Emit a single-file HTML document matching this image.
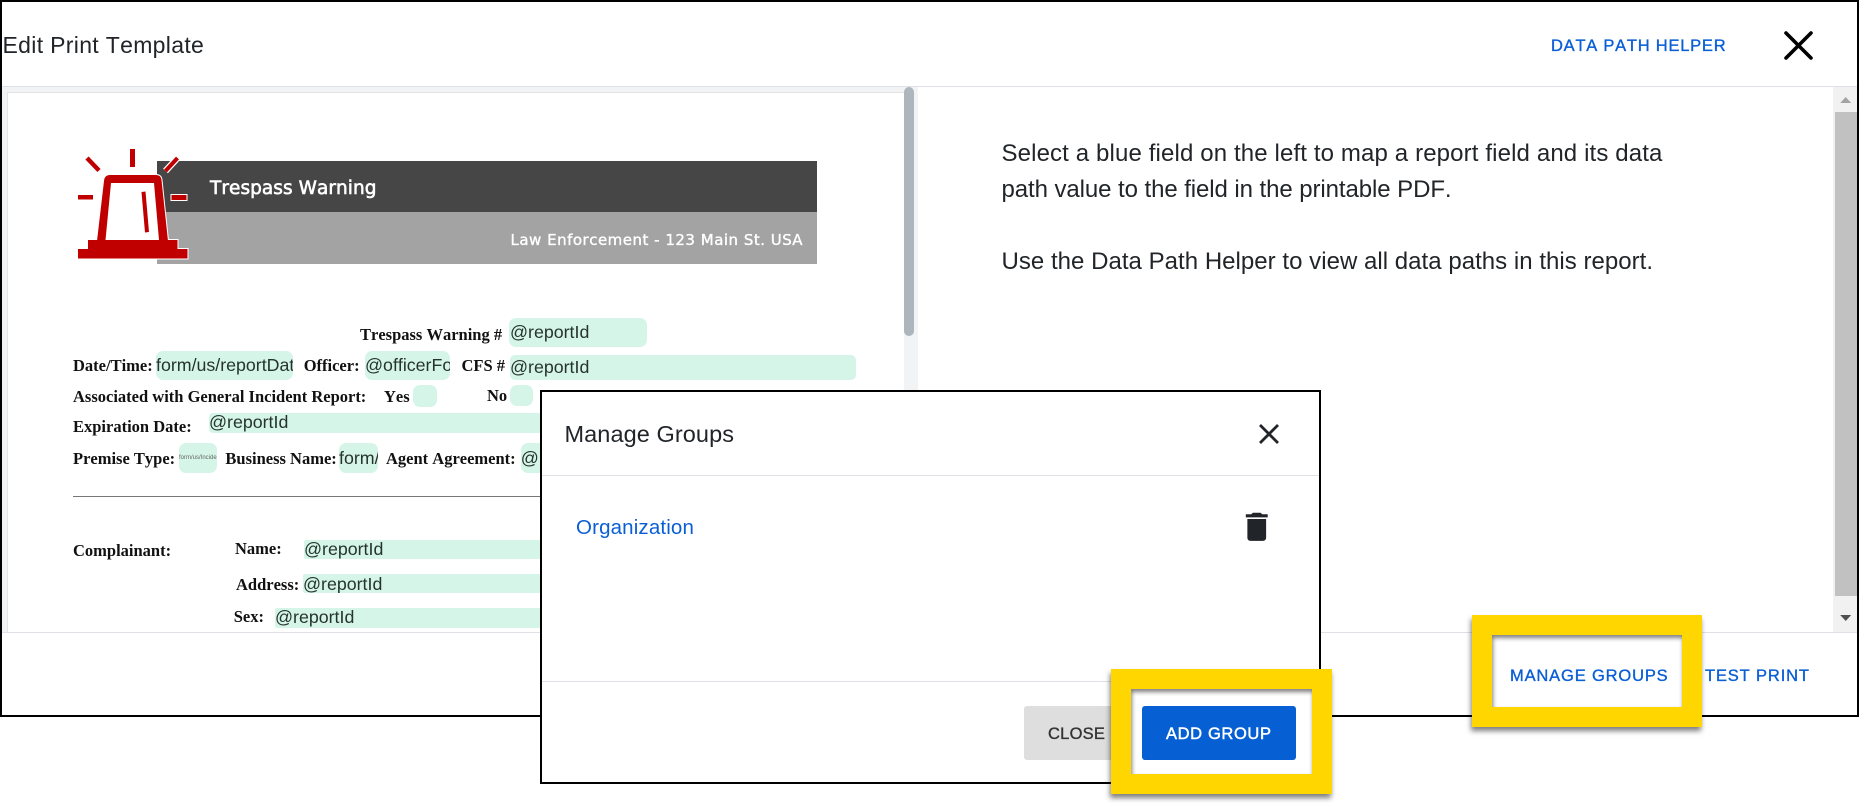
<!DOCTYPE html>
<html lang="en">
<head>
<meta charset="utf-8">
<title>Edit Print Template</title>
<style>
html,body{margin:0;padding:0;background:#fff;width:1862px;height:812px;overflow:hidden}
body{position:relative;font-family:"Liberation Sans",sans-serif;color:#212529;font-kerning:none}
.a{position:absolute}
.t{position:absolute;white-space:nowrap}
.b{color:#0a5fd5;font-size:16.500px;line-height:20px;-webkit-text-stroke:.35px currentColor}
.s{font-family:"Liberation Serif",serif;font-weight:700;font-size:16.500px;line-height:20px;color:#111}
.f{position:absolute;background:#d5f5e8;border-radius:7px;overflow:hidden;color:#26332e;font-size:17.800px;line-height:20px;white-space:nowrap}
.f span{position:absolute;left:1px}
.y{position:absolute;box-sizing:border-box;border:20px solid #ffd600;box-shadow:-1px 4px 5px rgba(0,0,0,.5),inset 1px 3px 4px rgba(0,0,0,.5)}
</style>
</head>
<body>
<!-- main dialog -->
<div class="a" style="left:0;top:0;width:1859px;height:717px;box-sizing:border-box;border:2px solid #000;background:#fff"></div>
<div class="a" style="left:2px;top:86px;width:1855px;height:1px;background:#dee2e6"></div>
<div class="a" style="left:2px;top:632px;width:1855px;height:1px;background:#dee2e6"></div>
<div class="t" style="left:2.500px;top:32px;font-size:23px;line-height:26px;letter-spacing:.32px">Edit Print Template</div>
<div class="t b" style="left:1551px;top:36px;letter-spacing:.76px">DATA PATH HELPER</div>
<svg class="a" style="left:1780px;top:26px" width="40" height="38" viewBox="0 0 40 38"><path d="M6 7 L31 32 M31 7 L6 32" stroke="#000" stroke-width="3.600" fill="none" stroke-linecap="round"/></svg>

<!-- left pane -->
<div class="a" style="left:2px;top:87px;width:916px;height:545px;background:#f1f3f5"></div>
<div class="a" style="left:7px;top:92px;width:897px;height:540px;background:#fff;box-sizing:border-box;border-left:1px solid #e2e4e6;border-top:1px solid #e2e4e6"></div>
<div class="a" style="left:904px;top:87px;width:10px;height:249px;background:#adb5bd;border-radius:5px"></div>

<!-- pdf banner -->
<div class="a" style="left:157px;top:161px;width:660px;height:51px;background:#464646"></div>
<div class="a" style="left:157px;top:212px;width:660px;height:52px;background:#a3a3a3"></div>
<div class="t" style="left:210px;top:176.500px;font-family:'DejaVu Sans',sans-serif;font-size:18.500px;line-height:24px;color:#fff;-webkit-text-stroke:.6px #fff;letter-spacing:.05px">Trespass Warning</div>
<div class="t" style="left:510.500px;top:229.500px;font-family:'DejaVu Sans',sans-serif;font-size:15px;line-height:20px;color:#fff;-webkit-text-stroke:.35px #fff;letter-spacing:.5px">Law Enforcement - 123 Main St. USA</div>
<svg class="a" style="left:70px;top:140px" width="125" height="125" viewBox="70 140 125 125">
  <g fill="#fff" stroke="#fff" stroke-width="2">
    <path d="M161.500 180 L168 241 L97 241 L104 181 Q104.500 175 110 175 L156 175 Q161 175 161.500 180 Z"/>
    <rect x="88" y="240" width="89.500" height="10"/>
    <rect x="78" y="249" width="109.500" height="9.500"/>
  </g>
  <g fill="#c00000">
    <path d="M104 181 Q104.500 175 110 175 L156 175 Q161 175 161.500 180 L168 241 L97 241 Z"/>
    <path d="M111 183 L154 183 L159 240 L105.500 240 Z" fill="#fff"/>
    <path d="M141.500 192 L145.500 191.500 L149 232 L145 232.500 Z"/>
    <rect x="88" y="240" width="89.500" height="10"/>
    <rect x="78" y="249" width="109.500" height="9.500"/>
    <rect x="130" y="149" width="5" height="18"/>
    <rect x="78" y="195" width="15" height="4.500"/>
    <rect x="170.500" y="194" width="17" height="7" fill="#fff"/>
    <rect x="171.500" y="195" width="15" height="5"/>
  </g>
  <path d="M87 158 L99 170.500" stroke="#c00000" stroke-width="4.500"/>
  <path d="M177.500 158 L165.500 171" stroke="#fff" stroke-width="6.500"/>
  <path d="M177.500 158 L165.500 171" stroke="#c00000" stroke-width="4"/>
</svg>

<!-- pdf form -->
<div class="t s" style="left:360px;top:325px">Trespass Warning #</div>
<div class="f" style="left:509px;top:318px;width:137.500px;height:29px"><span style="top:4px">@reportId</span></div>

<div class="t s" style="left:73px;top:355.500px">Date/Time:</div>
<div class="f" style="left:156px;top:351px;width:136.500px;height:29px"><span style="top:4px;left:0">form/us/reportDate</span></div>
<div class="t s" style="left:303.700px;top:355.500px">Officer:</div>
<div class="f" style="left:365px;top:351px;width:85px;height:29px"><span style="top:4px;left:0">@officerFoo</span></div>
<div class="t s" style="left:461.500px;top:355.500px">CFS #</div>
<div class="f" style="left:510px;top:355px;width:346px;height:25px;border-radius:5px"><span style="top:2px;left:0">@reportId</span></div>

<div class="t s" style="left:73px;top:386.500px">Associated with General Incident Report:</div>
<div class="t s" style="left:384px;top:386.500px">Yes</div>
<div class="f" style="left:413px;top:385px;width:24px;height:22px"></div>
<div class="t s" style="left:487px;top:386px">No</div>
<div class="f" style="left:510px;top:385px;width:22.600px;height:21px"></div>

<div class="t s" style="left:73px;top:417px">Expiration Date:</div>
<div class="f" style="left:209px;top:413px;width:400px;height:20px;border-radius:4px"><span style="top:-1px;left:0">@reportId</span></div>

<div class="t s" style="left:73px;top:448.500px">Premise Type:</div>
<div class="f" style="left:179px;top:443px;width:38px;height:30px"><span style="top:5px;left:0;font-size:6px;color:#666">form/us/Incident</span></div>
<div class="t s" style="left:225.400px;top:448.500px">Business Name:</div>
<div class="f" style="left:339px;top:443px;width:39px;height:30px"><span style="top:5px;left:0">form/us</span></div>
<div class="t s" style="left:386px;top:448.500px">Agent Agreement:</div>
<div class="f" style="left:520.800px;top:443px;width:100px;height:30px"><span style="top:5px;left:0">@reportId</span></div>

<div class="a" style="left:73px;top:495.500px;width:500px;height:1.500px;background:#777"></div>

<div class="t s" style="left:73px;top:541px">Complainant:</div>
<div class="t s" style="left:235px;top:539px">Name:</div>
<div class="f" style="left:304px;top:540px;width:400px;height:19px;border-radius:2px"><span style="top:-1px;left:0">@reportId</span></div>
<div class="t s" style="left:236px;top:575px">Address:</div>
<div class="f" style="left:303px;top:574px;width:400px;height:19px;border-radius:2px"><span style="top:0;left:0">@reportId</span></div>
<div class="t s" style="left:233.700px;top:607px">Sex:</div>
<div class="f" style="left:275px;top:608px;width:400px;height:20px;border-radius:2px"><span style="top:-1px;left:0">@reportId</span></div>

<!-- right pane -->
<div class="t" style="left:1001.500px;top:136px;font-size:24px;line-height:36px;letter-spacing:.13px;color:#212529">Select a blue field on the left to map a report field and its data</div>
<div class="t" style="left:1001.500px;top:172px;font-size:24px;line-height:36px;letter-spacing:-.08px;color:#212529">path value to the field in the printable PDF.</div>
<div class="t" style="left:1001.500px;top:244px;font-size:24px;line-height:36px;letter-spacing:.03px;color:#212529">Use the Data Path Helper to view all data paths in this report.</div>

<!-- right scrollbar -->
<div class="a" style="left:1833px;top:87px;width:23.500px;height:545px;background:#f1f1f1"></div>
<div class="a" style="left:1835px;top:112px;width:21.500px;height:484px;background:#c1c1c1"></div>
<svg class="a" style="left:1833px;top:87px" width="23" height="545" viewBox="0 0 23 545"><path d="M12.700 10 L18.200 16 L7.200 16 Z" fill="#a3a3a3"/><path d="M7.200 528 L18.200 528 L12.700 534 Z" fill="#505050"/></svg>

<!-- footer -->
<div class="t b" style="left:1510px;top:666px;letter-spacing:.84px">MANAGE GROUPS</div>
<div class="t b" style="left:1705px;top:666px;letter-spacing:.86px">TEST PRINT</div>
<div class="y" style="left:1472px;top:615px;width:230px;height:112px"></div>

<!-- modal -->
<div class="a" style="left:540px;top:390px;width:781px;height:394px;box-sizing:border-box;border:2px solid #000;background:#fff"></div>
<div class="a" style="left:542px;top:475px;width:777px;height:1px;background:#dee2e6"></div>
<div class="a" style="left:542px;top:681px;width:777px;height:1px;background:#dee2e6"></div>
<div class="t" style="left:564.500px;top:421px;font-size:23.500px;line-height:26px;letter-spacing:.08px">Manage Groups</div>
<svg class="a" style="left:1252px;top:418px" width="34" height="32" viewBox="0 0 34 32"><path d="M8 7 L26 25 M26 7 L8 25" stroke="#212529" stroke-width="2.800" fill="none"/></svg>
<div class="t" style="left:576px;top:516px;font-size:20.500px;line-height:24px;letter-spacing:.15px;color:#0a5fd5">Organization</div>
<svg class="a" style="left:1238px;top:508.300px" width="37.500" height="37.500" viewBox="0 0 24 24"><path fill="#212529" d="M6 19c0 1.100.9 2 2 2h8c1.100 0 2-.9 2-2V7H6v12zM19 4h-3.500l-1-1h-5l-1 1H5v2h14V4z"/></svg>

<div class="a" style="left:1024px;top:706px;width:100px;height:54px;background:#dedede;border-radius:3px"></div>
<div class="t b" style="left:1048px;top:723.500px;color:#333;letter-spacing:.25px;-webkit-text-stroke:.35px #333">CLOSE</div>
<div class="y" style="left:1111px;top:669px;width:221px;height:125px;background:#fff"></div>
<div class="a" style="left:1142px;top:706px;width:154px;height:54px;background:#0660d4;border-radius:3px"></div>
<div class="t b" style="left:1166px;top:723.500px;color:#fff;letter-spacing:.63px;-webkit-text-stroke:.45px #fff">ADD GROUP</div>
</body>
</html>
